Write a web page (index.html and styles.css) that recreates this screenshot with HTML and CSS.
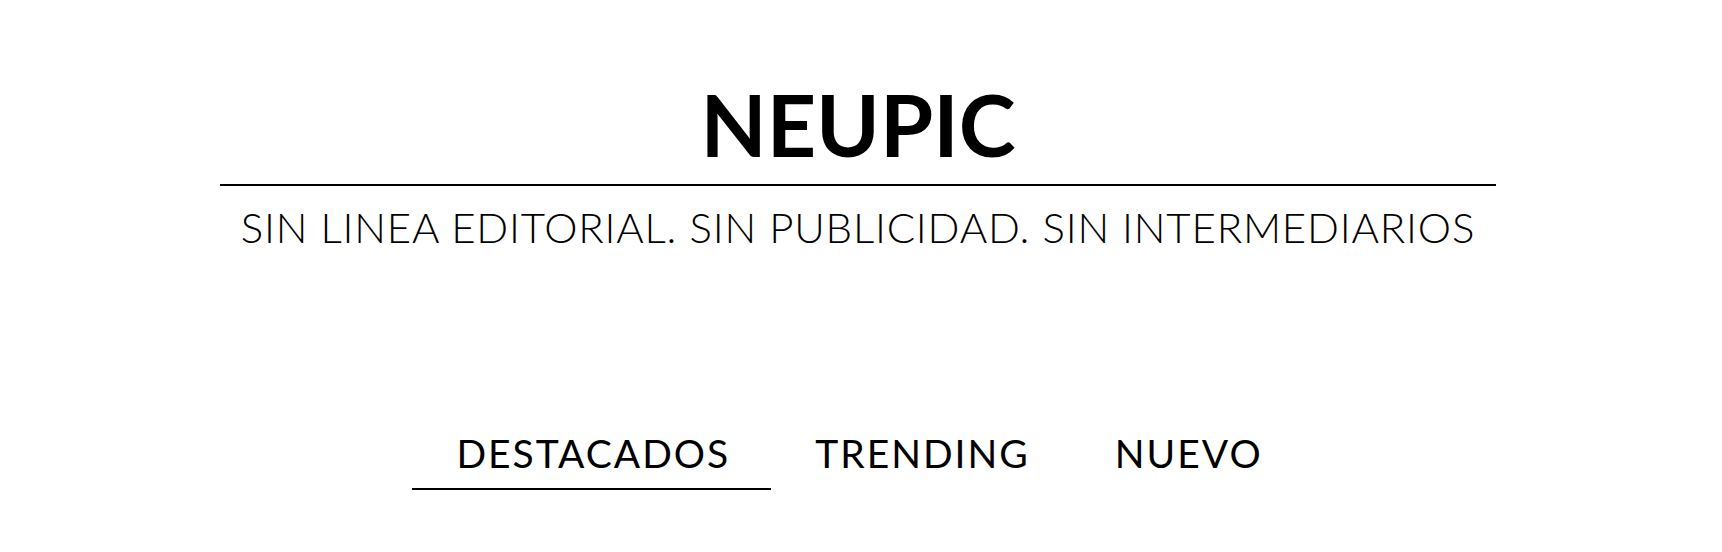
FILE: index.html
```html
<!DOCTYPE html>
<html lang="es">
<head>
<meta charset="utf-8">
<title>NEUPIC</title>
<link rel="stylesheet" href="styles.css">
</head>
<body>
<div class="page">
  <header class="masthead">
    <h1 class="brand">NEUPIC</h1>
    <div class="rule"></div>
    <p class="tagline">SIN LINEA EDITORIAL. SIN PUBLICIDAD. SIN INTERMEDIARIOS</p>
  </header>
  <nav class="tabs">
    <a class="tab active" href="#">DESTACADOS</a>
    <a class="tab" href="#">TRENDING</a>
    <a class="tab" href="#">NUEVO</a>
  </nav>
</div>
</body>
</html>
```
FILE: styles.css
```css
html, body {
  margin: 0;
  padding: 0;
  background: #fff;
  color: #000;
  font-family: "Lato", "Liberation Sans", sans-serif;
}

.page {
  padding-right: 6px;
}

.masthead {
  width: 1276px;
  margin: 0 auto;
  padding-top: 81px;
  text-align: center;
}

.brand {
  margin: 0;
  font-size: 86px;
  line-height: 1;
  font-weight: 700;
  letter-spacing: 0;
}

.rule {
  margin-top: 17px;
  height: 2px;
  background: #000;
}

.tagline {
  margin: 20px 0 0;
  font-size: 42px;
  line-height: 1;
  font-weight: 300;
  letter-spacing: 0.8px;
}

.tabs {
  display: flex;
  justify-content: center;
  margin-top: 186px;
}

.tab {
  display: block;
  padding: 0 41px 15px 44px;
  font-size: 39px;
  line-height: 1;
  letter-spacing: 2px;
  color: #000;
  text-decoration: none;
  border-bottom: 2px solid transparent;
}

.tab.active {
  border-bottom-color: #000;
}
```
